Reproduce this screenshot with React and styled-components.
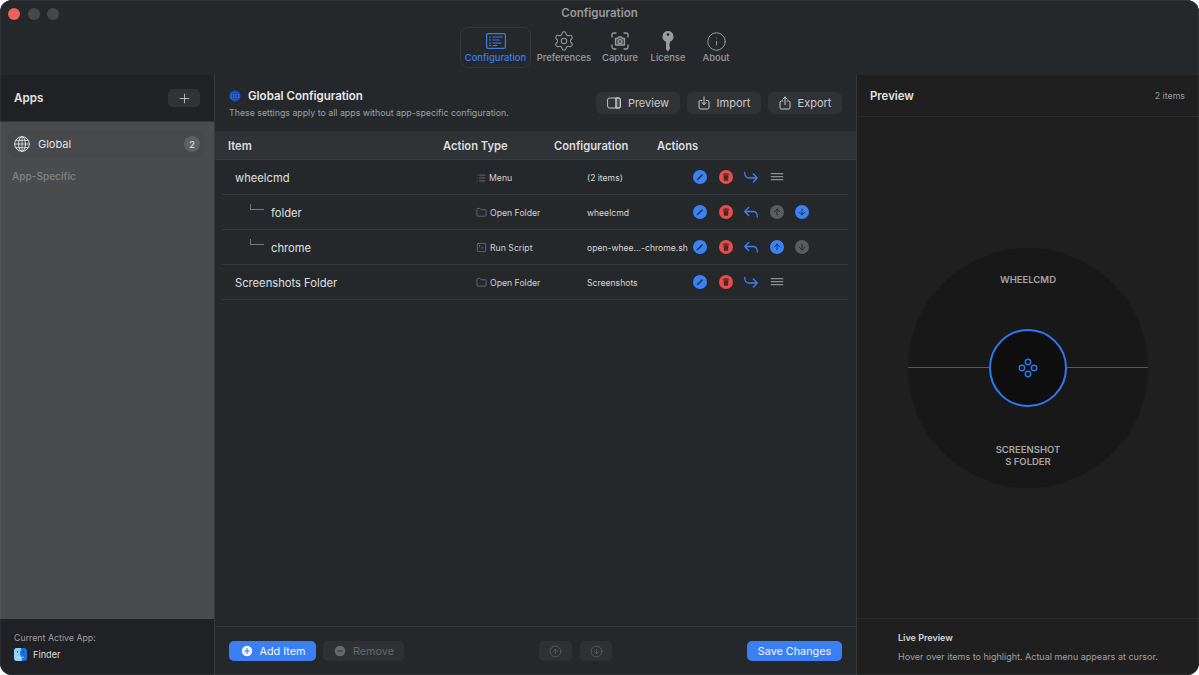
import React from 'react';
import styled, { createGlobalStyle } from 'styled-components';
import { Settings, Info, Plus, List, Folder, SquareTerminal, ArrowUp, ArrowDown, CirclePlus, CircleMinus, CircleArrowUp, CircleArrowDown } from 'lucide-react';

const GlobalStyle = createGlobalStyle`
html, body {
    margin: 0;
    padding: 0;
    background: #fff;
}
* {
    box-sizing: border-box;
}
`;

const Window = styled.div`
width: 1199px;
height: 675px;
position: relative;
display: flex;
flex-direction: column;
overflow: hidden;
border-radius: 12px;
background: #25282b;
color: #e6e6e7;
font-family: Inter, "Liberation Sans", sans-serif;

&::after {
    content: "";
    position: absolute;
    inset: 0;
    border-radius: 12px;
    border: 1px solid rgba(255, 255, 255, 0.05);
    pointer-events: none;
}
`;

const TitleBar = styled.div`
height: 75px;
flex: none;
position: relative;
display: flex;
flex-direction: column;
align-items: center;
padding-top: 7px;
background: #25282b;
`;

const Lights = styled.div`
position: absolute;
left: 8px;
top: 8px;
display: flex;
gap: 7.6px;
`;

const Light = styled.span`
width: 12px;
height: 12px;
border-radius: 50%;
background: ${(p) => p.$color};
`;

const Title = styled.div`
font-size: 11.5px;
line-height: 13px;
font-weight: 600;
color: #97999b;
`;

const Tabs = styled.div`
display: flex;
margin-top: 7px;
`;

const Tab = styled.div`
width: ${(p) => p.$width}px;
height: 41px;
display: flex;
flex-direction: column;
align-items: center;
padding-top: 2px;
border-radius: 8px;
border: 1px solid ${(p) => (p.$active ? '#34373b' : 'transparent')};
color: ${(p) => (p.$active ? '#3b7ce8' : '#9a9c9e')};
font-size: 9.4px;
line-height: 14px;
font-weight: 500;
white-space: nowrap;
`;

const TabIcon = styled.span`
height: 22px;
flex: none;
display: flex;
align-items: center;
justify-content: center;
margin-bottom: -1px;
`;

const Body = styled.div`
flex: 1;
min-height: 0;
display: flex;
`;

const Sidebar = styled.div`
width: 215px;
flex: none;
display: flex;
flex-direction: column;
border-right: 1px solid #37393c;
`;

const SideHead = styled.div`
height: 47px;
flex: none;
display: flex;
align-items: center;
justify-content: space-between;
padding: 0 14px 0 14px;
background: #202124;
border-bottom: 1px solid #333538;
`;

const SideTitle = styled.div`
font-size: 11.6px;
font-weight: 600;
color: #e4e4e5;
`;

const SmallButton = styled.div`
width: 32px;
height: 18px;
display: flex;
align-items: center;
justify-content: center;
border-radius: 5px;
background: #303336;
color: #d2d2d3;
`;

const SideList = styled.div`
flex: 1;
padding: 8px 9px 0 8px;
background: #4a4b4d;
`;

const SideItem = styled.div`
height: 28px;
display: flex;
align-items: center;
padding: 0 5px 0 6px;
border-radius: 8px;
background: #474849;
font-size: 11px;
color: #e2e2e3;
gap: 8px;
`;

const Badge = styled.span`
margin-left: auto;
width: 16px;
height: 16px;
display: flex;
align-items: center;
justify-content: center;
border-radius: 50%;
background: #5f6062;
font-size: 9px;
font-weight: 600;
color: #d0d0d1;
`;

const SideLabel = styled.div`
margin: 12px 0 0 4px;
font-size: 10px;
line-height: 12px;
font-weight: 600;
color: #7d7e80;
`;

const SideFoot = styled.div`
height: 56px;
flex: none;
padding: 13px 14px 0;
background: #202124;
`;

const FootLabel = styled.div`
font-size: 8.8px;
line-height: 12px;
color: #9c9d9f;
`;

const ActiveApp = styled.div`
display: flex;
align-items: center;
gap: 6px;
margin-top: 4px;
font-size: 9.2px;
line-height: 13px;
color: #dcdcdd;
`;

const Main = styled.div`
flex: 1;
min-width: 0;
display: flex;
flex-direction: column;
background: #25282b;
`;

const MainHead = styled.div`
height: 56px;
flex: none;
display: flex;
align-items: center;
justify-content: space-between;
padding: 0 14px;
`;

const HeadText = styled.div`
margin-top: 2px;
`;

const HeadTitle = styled.div`
display: flex;
align-items: center;
gap: 7px;
font-size: 11.5px;
line-height: 14px;
font-weight: 600;
color: #e8e8e9;
`;

const HeadSub = styled.div`
margin-top: 3px;
font-size: 8.8px;
line-height: 13px;
color: #9fa1a3;
`;

const HeadButtons = styled.div`
display: flex;
gap: 7px;
`;

const HeadButton = styled.div`
width: ${(p) => p.$width}px;
height: 22px;
display: flex;
align-items: center;
justify-content: center;
gap: 7px;
border-radius: 6px;
background: #303336;
color: #c9cacb;
font-size: 11px;
font-weight: 400;
`;

const TableHead = styled.div`
height: 29px;
flex: none;
display: grid;
grid-template-columns: 215px 111px 103px 1fr;
align-items: center;
padding: 2px 0 0 13px;
background: #303336;
border-bottom: 1px solid #3a3d40;
font-size: 11.2px;
font-weight: 600;
color: #dddedf;
`;

const Rows = styled.div`
flex: 1;
padding: 0 8px 0 7px;
`;

const Row = styled.div`
height: 35px;
display: grid;
grid-template-columns: 241px 111px 106px 1fr;
align-items: center;
padding-left: 13px;
border-bottom: 1px solid #35383b;
`;

const ItemName = styled.div`
display: flex;
align-items: center;
padding: 2px 0 0 ${(p) => (p.$child ? 36 : 0)}px;
position: relative;
font-size: 11.2px;
color: #dfe0e1;
`;

const Branch = styled.span`
position: absolute;
left: 15px;
top: 0;
width: 14px;
height: 6px;
border-left: 1px solid #77797b;
border-bottom: 1px solid #77797b;
`;

const TypeCell = styled.div`
display: flex;
align-items: center;
gap: 3px;
padding-top: 1px;
font-size: 8.7px;
color: #cfd0d1;
svg {
    color: #8e9092;
    flex: none;
}
`;

const ConfigCell = styled.div`
padding-top: 1px;
font-size: 8.6px;
color: #d6d7d8;
white-space: nowrap;
`;

const Actions = styled.div`
display: flex;
align-items: center;
gap: 11.6px;
`;

const RoundIcon = styled.span`
width: 14px;
height: 14px;
flex: none;
display: flex;
align-items: center;
justify-content: center;
border-radius: 50%;
background: ${(p) => p.$bg};
color: #1d2023;
`;

const MoveIcon = styled.span`
width: 14px;
height: 14px;
flex: none;
display: flex;
align-items: center;
justify-content: center;
color: ${(p) => p.$color || '#3b82f6'};
`;

const MainFoot = styled.div`
height: 49px;
flex: none;
display: flex;
align-items: center;
justify-content: space-between;
padding: 0 14px 0 14px;
border-top: 1px solid #33363a;
`;

const FootGroup = styled.div`
display: flex;
align-items: center;
gap: ${(p) => p.$gap}px;
`;

const FootButton = styled.div`
width: ${(p) => p.$width}px;
height: 20px;
display: flex;
align-items: center;
justify-content: center;
gap: 6px;
border-radius: 5px;
background: ${(p) => (p.$primary ? '#3b7ff5' : '#2e3134')};
color: ${(p) => (p.$primary ? '#f4f7fe' : '#66686a')};
font-size: 10.8px;
font-weight: 400;
`;

const PreviewPane = styled.div`
width: 343px;
flex: none;
display: flex;
flex-direction: column;
background: #1f1f1f;
border-left: 1px solid #36383b;
`;

const PreviewHead = styled.div`
height: 42px;
flex: none;
display: flex;
align-items: center;
justify-content: space-between;
padding: 0 14px 0 13px;
border-bottom: 1px solid #2c2c2d;
`;

const PreviewTitle = styled.div`
font-size: 11.4px;
font-weight: 600;
color: #e2e2e3;
`;

const PreviewCount = styled.div`
font-size: 8.8px;
color: #98999a;
`;

const PreviewStage = styled.div`
flex: 1;
display: flex;
align-items: center;
justify-content: center;
`;

const Wheel = styled.div`
width: 240px;
height: 240px;
position: relative;
display: flex;
flex-direction: column;
align-items: center;
justify-content: space-between;
padding: 26px 0 20px;
border-radius: 50%;
background: #181818;
`;

const WheelLabel = styled.div`
width: 70px;
font-size: 9.5px;
line-height: 12px;
font-weight: 600;
text-align: center;
word-break: break-all;
color: #a5a5a5;
`;

const Divider = styled.div`
position: absolute;
left: 0;
right: 0;
top: 119px;
height: 1px;
background: #5a5a5a;
`;

const Hub = styled.div`
position: absolute;
left: 81px;
top: 81px;
width: 78px;
height: 78px;
display: flex;
align-items: center;
justify-content: center;
border-radius: 50%;
background: #0e0e0e;
border: 2px solid #2f78f0;
color: #2f78f0;
`;

const PreviewFoot = styled.div`
height: 57px;
flex: none;
padding: 12px 0 0 41px;
border-top: 1px solid #2c2c2d;
`;

const LiveTitle = styled.div`
font-size: 9px;
line-height: 14px;
font-weight: 600;
color: #d6d6d7;
`;

const LiveText = styled.div`
margin-top: 5px;
font-size: 9px;
line-height: 13px;
color: #a0a0a1;
white-space: nowrap;
`;

function ReturnIcon({ back }) {
    return (
        <svg width="14" height="14" viewBox="0 0 14 14" fill="none" stroke="currentColor" strokeWidth="1.3" strokeLinecap="round" strokeLinejoin="round">
            {back
                ? <path d="M13.3 12C13.300 8.500 12 6.500 9 6.500H.8M4.600 2.500L.8 6.500l3.800 4" />
                : <path d="M.7 2.500c0 3.500 1.500 5.500 4.500 5.500h8M9.400 4l3.800 4-3.800 4" />}
        </svg>
    );
}

function EditGlyph() {
    return (
        <svg width="14" height="14" viewBox="0 0 14 14" fill="currentColor">
            <path d="M3.700 10.300l.4-1.300 5-5 .9.900-5 5z" />
        </svg>
    );
}

function TrashGlyph() {
    return (
        <svg width="14" height="14" viewBox="0 0 14 14" fill="currentColor" fillOpacity=".8">
            <path d="M5.800 3.200h2.400l.3.600h1.700v.9H3.800v-.9h1.700zM4.500 5.300h5l-.4 5a.6.6 0 0 1-.6.500h-3a.6.6 0 0 1-.6-.5z" />
        </svg>
    );
}

function BarsIcon() {
    return (
        <svg width="14" height="14" viewBox="0 0 14 14" stroke="currentColor" strokeWidth="1.100">
            <path d="M.8 3.600h12.400M.8 6.600h12.400M.8 9.600h12.400" />
        </svg>
    );
}

function GlobeIcon({ size, color, fill }) {
    return (
        <svg width={size} height={size} viewBox="0 0 16 16" fill="none" stroke={color} strokeWidth="1">
            <circle cx="8" cy="8" r="7.300" fill={fill || 'none'} />
            <ellipse cx="8" cy="8" rx="3.400" ry="7.300" />
            <path d="M8 .7v14.600M.7 8h14.600M1.800 4.400h12.400M1.800 11.600h12.400" strokeWidth=".8" />
        </svg>
    );
}

function ConfigIcon() {
    return (
        <svg width="20" height="16" viewBox="0 0 20 16" fill="none" stroke="currentColor" strokeWidth="1.200">
            <rect x=".6" y=".6" width="18.800" height="14.800" rx="1.500" />
            <path d="M3 4h2M3 7h2M3 10h2M3 12.500h2M6.500 4h10M6.500 7h7M6.500 10h9M6.500 12.500h5" strokeWidth="1.100" />
        </svg>
    );
}

function CaptureIcon() {
    return (
        <svg width="18" height="18" viewBox="0 0 18 18" fill="none" stroke="currentColor" strokeWidth="1.300" strokeLinecap="round" strokeLinejoin="round">
            <path d="M1 5V3a2 2 0 0 1 2-2h2M13 1h2a2 2 0 0 1 2 2v2M17 13v2a2 2 0 0 1-2 2h-2M5 17H3a2 2 0 0 1-2-2v-2" />
            <path d="M4.500 6.500h2l1-1.500h3l1 1.500h2v6.500h-9z" fill="currentColor" fillOpacity=".25" />
            <circle cx="9" cy="9.500" r="1.900" />
        </svg>
    );
}

function KeyIcon() {
    return (
        <svg width="12" height="21" viewBox="0 0 12 21" fill="currentColor">
            <path fillRule="evenodd" d="M6 0a5.500 5.500 0 0 1 2 10.600V12l-1 1 1 1-1 1 1 1v1.500L6 20.500 4 18.500v-7.900A5.500 5.500 0 0 1 6 0zm0 2.200a1.400 1.400 0 1 0 0 2.800 1.400 1.400 0 0 0 0-2.800z" />
        </svg>
    );
}

function PanelIcon() {
    return (
        <svg width="14" height="12" viewBox="0 0 14 12" fill="none" stroke="currentColor" strokeWidth="1">
            <rect x=".6" y="1" width="12.800" height="10" rx="1.800" />
            <path d="M9 1v10" />
            <path d="M9 1h3a1.400 1.400 0 0 1 1.400 1.400v7.200A1.400 1.400 0 0 1 12 11H9z" fill="currentColor" fillOpacity=".2" />
        </svg>
    );
}

function ImportIcon() {
    return (
        <svg width="12" height="14" viewBox="0 0 12 14" fill="none" stroke="currentColor" strokeWidth="1" strokeLinecap="round" strokeLinejoin="round">
            <path d="M3.800 4.500H2.500A1.500 1.500 0 0 0 1 6v5.500A1.500 1.500 0 0 0 2.500 13h7a1.500 1.500 0 0 0 1.500-1.500V6a1.500 1.500 0 0 0-1.500-1.500H8.200" />
            <path d="M6 1v7.500M3.800 6.500L6 8.700l2.200-2.200" />
        </svg>
    );
}

function ExportIcon() {
    return (
        <svg width="12" height="14" viewBox="0 0 12 14" fill="none" stroke="currentColor" strokeWidth="1" strokeLinecap="round" strokeLinejoin="round">
            <path d="M3.800 5H2.500A1.500 1.500 0 0 0 1 6.500v5A1.500 1.500 0 0 0 2.500 13h7a1.500 1.500 0 0 0 1.500-1.500v-5A1.500 1.500 0 0 0 9.500 5H8.200" />
            <path d="M6 8.500V1M3.800 3.200L6 1l2.200 2.200" />
        </svg>
    );
}

function HubIcon() {
    return (
        <svg width="20" height="20" viewBox="0 0 20 20" fill="none" stroke="currentColor" strokeWidth="1.400">
            <circle cx="10" cy="4" r="2.700" />
            <circle cx="10" cy="16" r="2.700" />
            <circle cx="4" cy="10" r="2.700" />
            <circle cx="16" cy="10" r="2.700" />
        </svg>
    );
}

function FinderIcon() {
    return (
        <svg width="13" height="13" viewBox="0 0 13 13">
            <rect width="13" height="13" rx="3" fill="#1f6fe0" />
            <path d="M3 0h4.200C6.300 3 6 5 6 7.500h1.200c0 2 .2 3.800.8 5.500H3a3 3 0 0 1-3-3V3a3 3 0 0 1 3-3z" fill="#8fd3f8" />
            <path d="M3.500 3v1.500M9.500 3v1.500" stroke="#123" strokeWidth=".8" />
            <path d="M3 9c2 1.400 5 1.400 7 0" stroke="#e8f4ff" strokeWidth=".7" fill="none" />
        </svg>
    );
}

const items = [
    { name: 'wheelcmd', icon: 'menu', type: 'Menu', config: '(2 items)' },
    { name: 'folder', child: true, icon: 'folder', type: 'Open Folder', config: 'wheelcmd', up: false, down: true },
    { name: 'chrome', child: true, icon: 'script', type: 'Run Script', config: 'open-whee...-chrome.sh', up: true, down: false },
    { name: 'Screenshots Folder', icon: 'folder', type: 'Open Folder', config: 'Screenshots' },
];

const typeIcons = {
    menu: <List size={10} strokeWidth={1.5} />,
    folder: <Folder size={11} strokeWidth={1.3} />,
    script: <SquareTerminal size={11} strokeWidth={1.3} />,
};

function ItemRow({ item }) {
    return (
        <Row>
            <ItemName $child={item.child}>
                {item.child && <Branch />}
                {item.name}
            </ItemName>
            <TypeCell>
                {typeIcons[item.icon]}
                {item.type}
            </TypeCell>
            <ConfigCell>{item.config}</ConfigCell>
            <Actions>
                <RoundIcon $bg="#3b82f6"><EditGlyph /></RoundIcon>
                <RoundIcon $bg="#ea4b4b"><TrashGlyph /></RoundIcon>
                <MoveIcon><ReturnIcon back={item.child} /></MoveIcon>
                {item.child ? (
                    <>
                        <RoundIcon $bg={item.up ? '#3b82f6' : '#5b5c5e'}><ArrowUp size={10} strokeWidth={2} /></RoundIcon>
                        <RoundIcon $bg={item.down ? '#3b82f6' : '#5b5c5e'}><ArrowDown size={10} strokeWidth={2} /></RoundIcon>
                    </>
                ) : (
                    <MoveIcon $color="#8d8f91"><BarsIcon /></MoveIcon>
                )}
            </Actions>
        </Row>
    );
}

export default function App() {
    return (
        <Window>
            <GlobalStyle />
            <TitleBar>
                <Lights>
                    <Light $color="#ed5f5b" />
                    <Light $color="#45484b" />
                    <Light $color="#45484b" />
                </Lights>
                <Title>Configuration</Title>
                <Tabs>
                    <Tab $width={71} $active><TabIcon><ConfigIcon /></TabIcon>Configuration</Tab>
                    <Tab $width={66}><TabIcon><Settings size={22} strokeWidth={1.100} /></TabIcon>Preferences</Tab>
                    <Tab $width={46}><TabIcon><CaptureIcon /></TabIcon>Capture</Tab>
                    <Tab $width={50}><TabIcon><KeyIcon /></TabIcon>License</Tab>
                    <Tab $width={46}><TabIcon><Info size={21} strokeWidth={1.100} /></TabIcon>About</Tab>
                </Tabs>
            </TitleBar>
            <Body>
                <Sidebar>
                    <SideHead>
                        <SideTitle>Apps</SideTitle>
                        <SmallButton><Plus size={15} strokeWidth={1.300} /></SmallButton>
                    </SideHead>
                    <SideList>
                        <SideItem>
                            <GlobeIcon size={16} color="#e2e2e3" />
                            Global
                            <Badge>2</Badge>
                        </SideItem>
                        <SideLabel>App-Specific</SideLabel>
                    </SideList>
                    <SideFoot>
                        <FootLabel>Current Active App:</FootLabel>
                        <ActiveApp><FinderIcon />Finder</ActiveApp>
                    </SideFoot>
                </Sidebar>
                <Main>
                    <MainHead>
                        <HeadText>
                            <HeadTitle>
                                <GlobeIcon size={12} color="#123a8a" fill="#2f6ee0" />
                                Global Configuration
                            </HeadTitle>
                            <HeadSub>These settings apply to all apps without app-specific configuration.</HeadSub>
                        </HeadText>
                        <HeadButtons>
                            <HeadButton $width={84}><PanelIcon />Preview</HeadButton>
                            <HeadButton $width={74}><ImportIcon />Import</HeadButton>
                            <HeadButton $width={74}><ExportIcon />Export</HeadButton>
                        </HeadButtons>
                    </MainHead>
                    <TableHead>
                        <div>Item</div>
                        <div>Action Type</div>
                        <div>Configuration</div>
                        <div>Actions</div>
                    </TableHead>
                    <Rows>
                        {items.map((item) => <ItemRow key={item.name} item={item} />)}
                    </Rows>
                    <MainFoot>
                        <FootGroup $gap={7}>
                            <FootButton $primary $width={87}><CirclePlus size={14} fill="#f4f7fe" color="#3b7ff5" />Add Item</FootButton>
                            <FootButton $width={81}><CircleMinus size={14} fill="#66686a" color="#2e3134" />Remove</FootButton>
                        </FootGroup>
                        <FootGroup $gap={8}>
                            <FootButton $width={33}><CircleArrowUp size={13} strokeWidth={1.300} /></FootButton>
                            <FootButton $width={32}><CircleArrowDown size={13} strokeWidth={1.300} /></FootButton>
                        </FootGroup>
                        <FootButton $primary $width={95}>Save Changes</FootButton>
                    </MainFoot>
                </Main>
                <PreviewPane>
                    <PreviewHead>
                        <PreviewTitle>Preview</PreviewTitle>
                        <PreviewCount>2 items</PreviewCount>
                    </PreviewHead>
                    <PreviewStage>
                        <Wheel>
                            <Divider />
                            <WheelLabel>WHEELCMD</WheelLabel>
                            <Hub><HubIcon /></Hub>
                            <WheelLabel>SCREENSHOTS FOLDER</WheelLabel>
                        </Wheel>
                    </PreviewStage>
                    <PreviewFoot>
                        <LiveTitle>Live Preview</LiveTitle>
                        <LiveText>Hover over items to highlight. Actual menu appears at cursor.</LiveText>
                    </PreviewFoot>
                </PreviewPane>
            </Body>
        </Window>
    );
}
